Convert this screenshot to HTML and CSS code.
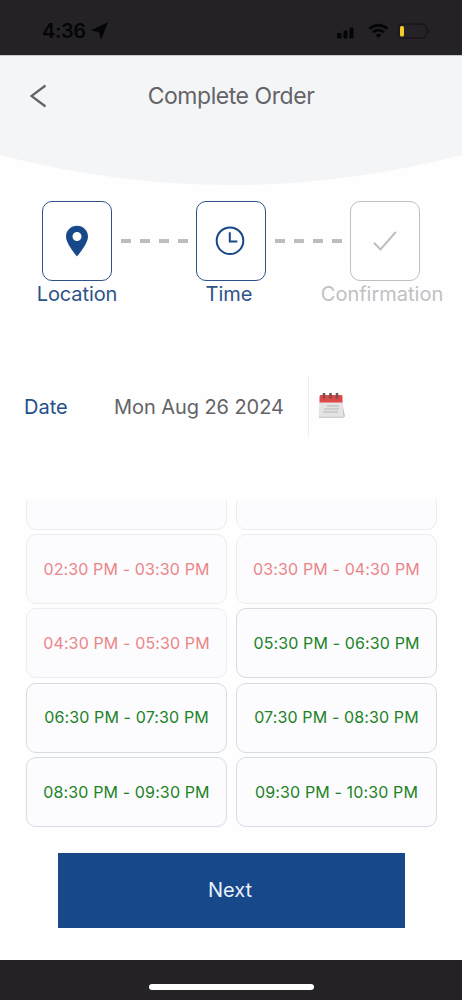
FILE: index.html
```
<!DOCTYPE html>
<html lang="en">
<head>
<meta charset="utf-8">
<title>Complete Order</title>
<link rel="stylesheet" href="styles.css">
</head>
<body>
<div class="status">
  <span class="clock">4:36</span>
  <svg class="arrow" width="17" height="18" viewBox="0 0 17 18"><path d="M16.500 .8 10 17 8.300 9.800.8 8.300Z" fill="#050506" stroke="#050506" stroke-width=".6" stroke-linejoin="round"/></svg>
  <svg class="indicators" width="94" height="20" viewBox="0 0 94 20">
    <g fill="#050506"><rect x="1" y="12" width="4.500" height="5.500" rx="1"/><rect x="7.500" y="9.500" width="4" height="8" rx="1"/><rect x="13.500" y="6.500" width="4" height="11" rx="1"/></g>
    <g fill="none" stroke="#050506" stroke-width="2.700"><path d="M33.500 7.700Q42.500 .8 51.500 7.700"/><path d="M37 11.200Q42.500 7 48 11.200"/></g>
    <path d="M39.500 13.700Q42.500 11.700 45.500 13.700L42.500 17Z" fill="#050506"/>
    <rect x="62.500" y="3" width="28" height="14" rx="4.500" fill="none" stroke="#17161a" stroke-width="1.300"/>
    <path d="M92.500 8v4.500" stroke="#17161a" stroke-width="1.500"/>
    <rect x="64" y="5" width="4" height="10.500" rx="1.500" fill="#f2cd29"/>
  </svg>
</div>
<header class="header">
  <svg class="back" width="18" height="24" viewBox="0 0 18 24"><path d="M15.500 1.500 1.500 12 15.500 22.500" fill="none" stroke="#626365" stroke-width="2.200"/></svg>
  <h1 class="title">Complete Order</h1>
</header>
<svg class="curve" width="462" height="31" viewBox="0 0 462 31"><path d="M0 0H462Q231 60 0 0Z" fill="#f4f5f7"/></svg>
<main>
  <section class="steps">
    <div class="step">
      <div class="box"><svg width="24" height="32" viewBox="0 0 24 32"><path fill-rule="evenodd" d="M12 .8C5.900 .8 1 5.600 1 11.500 1 19 12 31.500 12 31.500S23 19 23 11.500C23 5.600 18.100.8 12 .8ZM12 7a4.500 4.500 0 1 1 0 9 4.500 4.500 0 1 1 0-9Z" fill="#17498a"/></svg></div>
      <span class="label location">Location</span>
    </div>
    <div class="dashes"><i></i><i></i><i></i><i></i></div>
    <div class="step">
      <div class="box"><svg width="32" height="30" viewBox="0 0 32 30"><g fill="none" stroke="#17498a" stroke-width="2"><circle cx="15" cy="14.700" r="13.300"/><path d="M14.800 6.300V15.500H22.300"/></g></svg></div>
      <span class="label time">Time</span>
    </div>
    <div class="dashes"><i></i><i></i><i></i><i></i></div>
    <div class="step pending">
      <div class="box"><svg width="26" height="22" viewBox="0 0 26 22"><path d="M2 12.800 8.500 19.500 23.800 2" fill="none" stroke="#bfbfc1" stroke-width="2"/></svg></div>
      <span class="label confirmation">Confirmation</span>
    </div>
  </section>
  <section class="date-row">
    <span class="date-label">Date</span>
    <span class="date-value">Mon Aug 26 2024</span>
    <span class="calendar"><svg width="30" height="30" viewBox="0 0 30 30">
      <path d="M24 10 27 24.500 24 26Z" fill="#bfbfc0"/>
      <path d="M1.500 9.500H24.500L25.500 26H1Q.5 26 .7 24Z" fill="#e4e4e5"/>
      <path d="M1 25.300H25.500" stroke="#c8c8c9"/>
      <path d="M2.500 3H23.500Q24.500 3 24.500 5V10.500H1.500V5Q1.500 3 2.500 3Z" fill="#dc4946"/>
      <path d="M6 1V6.500M12.500 1V6.500M19 1V6.500" stroke="#745051" stroke-width="2.500"/>
      <path d="M9 14H21M6 17H21M5 20H20" stroke="#b5b5b7" stroke-width="1.200"/>
    </svg></span>
  </section>
  <section class="slots">
    <div class="slot taken"></div><div class="slot taken"></div>
    <div class="slot taken"><span>02:30 PM - 03:30 PM</span></div><div class="slot taken"><span>03:30 PM - 04:30 PM</span></div>
    <div class="slot taken"><span>04:30 PM - 05:30 PM</span></div><div class="slot"><span>05:30 PM - 06:30 PM</span></div>
    <div class="slot"><span>06:30 PM - 07:30 PM</span></div><div class="slot"><span>07:30 PM - 08:30 PM</span></div>
    <div class="slot"><span>08:30 PM - 09:30 PM</span></div><div class="slot"><span>09:30 PM - 10:30 PM</span></div>
  </section>
  <button class="next">Next</button>
</main>
<footer class="footer"><div class="home"></div></footer>
</body>
</html>
```
FILE: styles.css
```
* { box-sizing: border-box; }
body {
  margin: 0; width: 462px; height: 1000px; overflow: hidden;
  display: flex; flex-direction: column;
  background: #fefefe; font-family: Inter, "Liberation Sans", sans-serif;
}
svg { display: block; flex: none; }
.status {
  height: 55px; flex: none; display: flex; align-items: center;
  padding: 7px 32px 0 42px; background: #242226;
}
.clock { font-size: 20px; font-weight: 600; color: #050506; width: 49px; letter-spacing: -0.4px; white-space: nowrap; }
.indicators { margin-left: auto; }
.header {
  height: 100px; flex: none; display: flex; align-items: center;
  padding: 0 31px 19px 30px; background: #f4f5f7; border-top: 1px solid #c9cacc;
}
.title {
  flex: 1; margin: 0 17px 0 0; text-align: center; font-size: 23px;
  font-weight: 400; letter-spacing: -0.45px; color: #646467;
}
.curve { flex: none; }
main { height: 774px; flex: none; display: flex; flex-direction: column; }
.steps { display: flex; height: 120px; padding: 15px 42px 0; }
.step { width: 70px; display: flex; flex-direction: column; align-items: center; color: #2d5388; }
.box {
  width: 70px; height: 80px; flex: none; display: flex; align-items: center; justify-content: center;
  border: 1.3px solid #2d5388; border-radius: 10px;
}
.label { font-size: 20px; line-height: 26px; white-space: nowrap; }
.location { letter-spacing: -0.1px; }
.time { margin-right: 4px; }
.pending { color: #c0c0c3; }
.pending .box { border-color: #c0c0c3; }
.confirmation { margin-right: 6px; }
.dashes { flex: 1; height: 80px; display: flex; align-items: center; justify-content: center; gap: 9px; }
.dashes i { width: 10px; height: 4px; background: #bdbdbd; }
.date-row { display: flex; align-items: center; height: 61px; margin-top: 70px; padding-left: 24px; font-size: 20px; }
.date-label { width: 90px; color: #24508a; }
.date-value { width: 194px; color: #636366; white-space: nowrap; letter-spacing: -0.07px; }
.calendar { height: 61px; display: flex; align-items: center; padding-left: 9px; border-left: 1px solid #ededf0; }
.slots {
  height: 327px; margin: 63px 25px 0 26px; overflow: hidden;
  display: grid; grid-template-columns: 201px 201px; grid-auto-rows: 70px;
  column-gap: 9px; row-gap: 4.300px; align-content: end;
}
.slot {
  display: flex; align-items: center; justify-content: center;
  padding-bottom: 1px;
  border: 1px solid #d5dbe2; border-radius: 10px; background: #fcfcfe;
  font-size: 16px; letter-spacing: 0.13px; color: #218226; white-space: nowrap;
}
.taken { border-color: #ebedf1; color: #eb8588; }
.next {
  width: 347px; height: 75px; margin: 26px 0 0 57.5px; padding: 0 2px 1px 0; border: 0;
  background: #17488a; color: #e9f1fa; font: 400 20px Inter, "Liberation Sans", sans-serif;
}
.footer { height: 40px; flex: none; display: flex; justify-content: center; padding-top: 24px; background: #242226; }
.home { width: 165px; height: 6px; border-radius: 3px; background: #fff; }
```
